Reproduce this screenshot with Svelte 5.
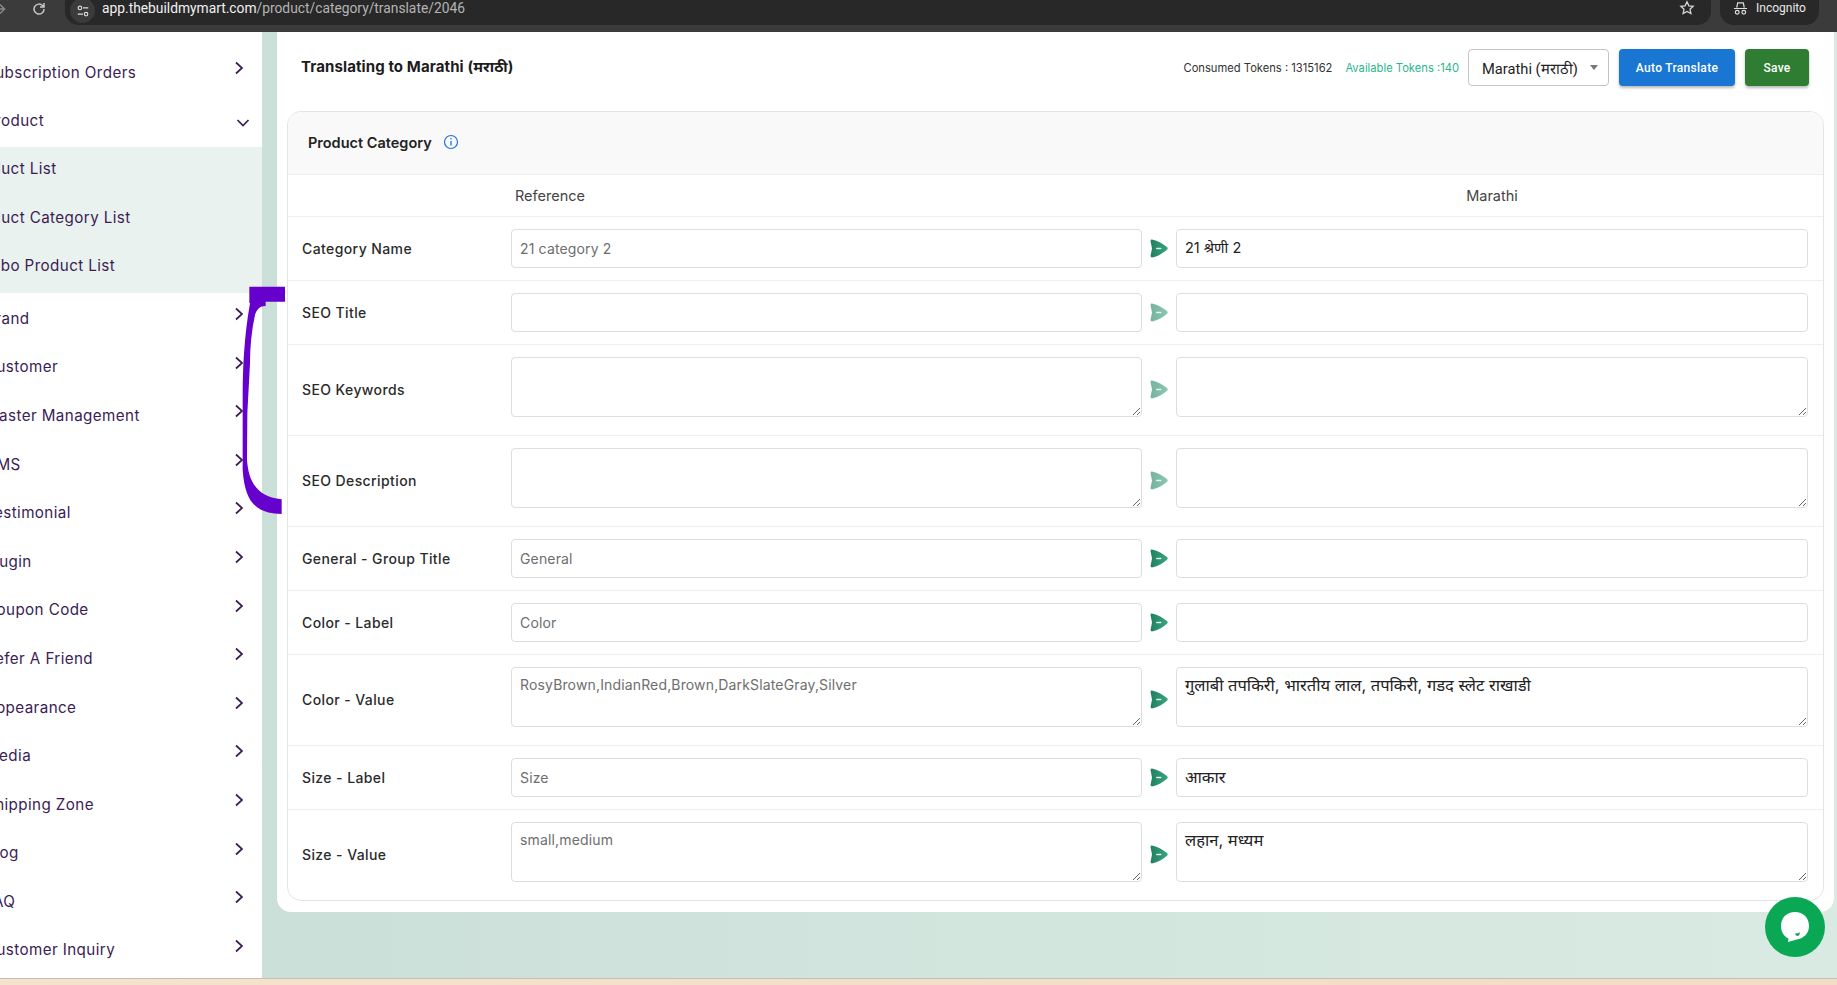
<script>
  const menu = [
    { name: 'Subscription Orders' },
    { name: 'Product', open: true, children: ['Product List', 'Product Category List', 'Combo Product List'] },
    { name: 'Brand' },
    { name: 'Customer' },
    { name: 'Master Management' },
    { name: 'CMS' },
    { name: 'Testimonial' },
    { name: 'Plugin' },
    { name: 'Coupon Code' },
    { name: 'Refer A Friend' },
    { name: 'Appearance' },
    { name: 'Media' },
    { name: 'Shipping Zone' },
    { name: 'Blog' },
    { name: 'FAQ' },
    { name: 'Customer Inquiry' }
  ];

  const rows = [
    { label: 'Category Name', ref: '21 category 2', value: '21 श्रेणी 2', tight: true },
    { label: 'SEO Title', ref: '', value: '', faded: true },
    { label: 'SEO Keywords', ref: '', value: '', area: true, faded: true },
    { label: 'SEO Description', ref: '', value: '', area: true, faded: true },
    { label: 'General - Group Title', ref: 'General', value: '' },
    { label: 'Color - Label', ref: 'Color', value: '' },
    {
      label: 'Color - Value',
      ref: 'RosyBrown,IndianRed,Brown,DarkSlateGray,Silver',
      value: 'गुलाबी तपकिरी, भारतीय लाल, तपकिरी, गडद स्लेट राखाडी',
      area: true
    },
    { label: 'Size - Label', ref: 'Size', value: 'आकार' },
    { label: 'Size - Value', ref: 'small,medium', value: 'लहान, मध्यम', area: true }
  ];
</script>

<div class="page">
  <header class="chrome">
    <svg class="nav-icon forward" viewBox="0 0 16 16"><path d="M1 8h11M8 3.500 12.500 8 8 12.500" fill="none" stroke="#8a8a8a" stroke-width="1.500" /></svg>
    <svg class="nav-icon reload" viewBox="0 0 16 16"><path d="M13 8a5 5 0 1 1-1.500-3.500L13 6M13 2v4H9" fill="none" stroke="#c8c8c8" stroke-width="1.500" /></svg>
    <div class="omnibox">
      <span class="tune">
        <svg viewBox="0 0 16 16" width="14" height="14"><path d="M8 4.500h6M2 11.500h6" stroke="#ddd" stroke-width="1.300" /><circle cx="4.500" cy="4.500" r="2" fill="none" stroke="#ddd" stroke-width="1.300" /><circle cx="11.500" cy="11.500" r="2" fill="none" stroke="#ddd" stroke-width="1.300" /></svg>
      </span>
      <span class="url"><b>app.thebuildmymart.com</b>/product/category/translate/2046</span>
      <svg class="star" viewBox="0 0 16 16" width="16" height="16"><path d="m8 1.800 1.900 4 4.300.5-3.200 3 .9 4.300L8 11.500l-3.900 2.100.9-4.300-3.200-3 4.300-.5z" fill="none" stroke="#d8d8d8" stroke-width="1.300" /></svg>
    </div>
    <div class="incognito">
      <svg viewBox="0 0 16 16" width="15" height="15"><path d="M1 8h14M4 7l1-5h6l1 5" fill="none" stroke="#ddd" stroke-width="1.300" /><circle cx="4.500" cy="12" r="2" fill="none" stroke="#ddd" stroke-width="1.300" /><circle cx="11.500" cy="12" r="2" fill="none" stroke="#ddd" stroke-width="1.300" /></svg>
      <span>Incognito</span>
    </div>
  </header>

  <div class="body">
    <aside class="sidebar">
      <ul class="menu">
        {#each menu as item}
          <li class="item">
            <span>{item.name}</span>
            {#if item.open}
              <svg class="chev down" viewBox="0 0 14 14"><path d="m1.500 4 5.500 5.500L12.500 4" /></svg>
            {:else}
              <svg class="chev" viewBox="0 0 14 14"><path d="m4 1.500 6 5.500-6 5.500" /></svg>
            {/if}
          </li>
          {#if item.children}
            <ul class="submenu">
              {#each item.children as child}
                <li>{child}</li>
              {/each}
            </ul>
          {/if}
        {/each}
      </ul>
    </aside>

    <main class="panel">
      <div class="topline">
        <h1>Translating to Marathi (मराठी)</h1>
        <div class="actions">
          <span class="tokens">Consumed Tokens : 1315162</span>
          <span class="tokens available">Available Tokens :140</span>
          <div class="select">
            <span>Marathi (मराठी)</span>
            <i class="caret"></i>
          </div>
          <button class="btn blue">Auto Translate</button>
          <button class="btn green">Save</button>
        </div>
      </div>

      <section class="card">
        <div class="card-head">
          <h2>Product Category</h2>
          <svg viewBox="0 0 16 16" width="16" height="16"><circle cx="8" cy="8" r="6.500" fill="none" stroke="#1a73e8" stroke-width="1.200" /><path d="M8 7v4.500" stroke="#1a73e8" stroke-width="1.300" /><circle cx="8" cy="4.800" r=".8" fill="#1a73e8" /></svg>
        </div>
        <div class="columns">
          <span class="ref-title">Reference</span>
          <span class="lang-title">Marathi</span>
        </div>
        {#each rows as row}
          <div class="row">
            <span class="label">{row.label}</span>
            {#if row.area}
              <textarea class="field ref" readonly value={row.ref}></textarea>
            {:else}
              <input class="field ref" readonly value={row.ref} />
            {/if}
            <svg class="send" class:faded={row.faded} viewBox="0 0 18 19" width="18" height="19">
              <path d="M2 .5C8 1.500 13 5 17 8q1.400 1.400 0 2.800C13 14 8 17.500 2 18.500Q.3 18.500.6 16.500L2 9.500.6 2.500Q.3.3 2 .5Z" fill="url(#sendFill)" />
              <rect x="6" y="8.800" width="5.500" height="1.400" rx=".7" fill="#fff" opacity=".85" />
            </svg>
            {#if row.area}
              <textarea class="field value" value={row.value}></textarea>
            {:else}
              <input class="field value" class:tight={row.tight} value={row.value} />
            {/if}
          </div>
        {/each}
      </section>
    </main>
  </div>

  <div class="taskbar"></div>

  <svg class="defs" width="0" height="0">
    <defs>
      <linearGradient id="sendFill" x1="0" y1="0" x2="1" y2="0">
        <stop offset="0" stop-color="#1f8060" />
        <stop offset="1" stop-color="#3aa57f" />
      </linearGradient>
    </defs>
  </svg>

  <!-- hand drawn marker bracket on top of the screenshot -->
  <svg class="marker" viewBox="0 0 900 810">
    <path d="M148 50H255V95H197V108C180 108 170 118 165 135 155 180 150 230 150 280L142 430 141 570C145 620 160 680 245 688V732C170 730 135 700 128 600L128 380C128 300 132 200 150 100L148 98Z" fill="#6600cc" />
  </svg>

  <button class="chat" aria-label="Chat">
    <svg viewBox="0 0 28 30" width="28" height="30">
      <path d="M14 0c8 0 14 5.500 14 14 0 6.500-4 10.500-8.500 12.500L7 30l.5-3.500C3 24.500 0 20 0 14 0 5.500 6 0 14 0Z" fill="#fff" />
      <path d="M14 21.500q3.500 0 5-1.200-.3 3.600-2.500 3.600t-2.500-2.400Z" fill="#0aa855" />
    </svg>
  </button>
</div>

<style>
  :global(body) {
    margin: 0;
    overflow: hidden;
  }

  .page {
    position: relative;
    width: 1837px;
    height: 985px;
    display: flex;
    flex-direction: column;
    overflow: hidden;
    font-family: Inter, "Noto Sans", sans-serif;
    color: #222;
  }

  .chrome {
    height: 32px;
    flex: none;
    background: #3b3b3b;
    display: flex;
    align-items: flex-start;
    position: relative;
  }

  .nav-icon {
    width: 16px;
    height: 16px;
    flex: none;
    margin-top: 1px;
  }

  .forward {
    margin-left: -8px;
  }

  .reload {
    margin-left: 23px;
  }

  .omnibox {
    margin-left: 18px;
    width: 1646px;
    height: 25px;
    background: #282828;
    border-radius: 0 0 14px 14px;
    display: flex;
    align-items: center;
    flex: none;
  }

  .tune {
    margin-left: 5px;
    width: 25px;
    height: 25px;
    margin-top: -4px;
    background: #3b3b3b;
    border-radius: 50%;
    display: flex;
    align-items: center;
    justify-content: center;
  }

  .url {
    margin-left: 7px;
    margin-top: -9px;
    font-family: Roboto, sans-serif;
    font-size: 13.800px;
    color: #b4b4b4;
  }

  .url b {
    font-weight: 400;
    color: #f0f0f0;
  }

  .star {
    margin-left: auto;
    margin-right: 16px;
    margin-top: -9px;
  }

  .incognito {
    margin-left: 9px;
    width: 99px;
    height: 25px;
    background: #282828;
    border-radius: 0 0 14px 14px;
    display: flex;
    gap: 8px;
    padding: 0 0 9px 13px;
    box-sizing: border-box;
    align-items: center;
    font-family: Roboto, sans-serif;
    font-size: 12px;
    color: #e8e8e8;
  }

  .body {
    flex: 1;
    display: flex;
    min-height: 0;
    background: linear-gradient(90deg, #c9ddd8 0%, #d3e6de 60%, #d9eae2 100%);
  }

  .sidebar {
    width: 262px;
    flex: none;
    background: #fff;
    overflow: hidden;
  }

  .menu {
    list-style: none;
    margin: 15px 0 0 -15px;
    padding: 0;
    color: #3a1d54;
    font-size: 15.200px;
    letter-spacing: 0.4px;
  }

  .item {
    height: 48.600px;
    display: flex;
    align-items: center;
    position: relative;
    white-space: nowrap;
  }

  .item span {
    padding-top: 2px;
  }

  .chev {
    position: absolute;
    left: 247px;
    top: 14px;
    width: 14px;
    height: 14px;
    fill: none;
    stroke: #3a1d54;
    stroke-width: 1.700;
  }

  .chev.down {
    left: 251px;
    top: 20px;
  }

  .submenu {
    list-style: none;
    margin: 3px 0 0 -19px;
    padding: 0;
    background: #e9f2ee;
  }

  .submenu li {
    height: 48.600px;
    line-height: 44px;
    white-space: nowrap;
  }

  .panel {
    margin: 0 3px 66px 15px;
    flex: 1;
    min-width: 0;
    background: #fff;
    border-radius: 0 0 14px 14px;
    padding: 0 10px;
    box-sizing: border-box;
  }

  .topline {
    height: 79px;
    box-sizing: border-box;
    display: flex;
    align-items: flex-start;
    justify-content: space-between;
    padding: 17px 15px 0 14px;
  }

  h1 {
    margin: 7px 0 0;
    font-size: 15px;
    font-weight: 700;
    letter-spacing: 0.1px;
    color: #1c1c1c;
  }

  .actions {
    display: flex;
    align-items: center;
  }

  .tokens {
    font-size: 11.200px;
    color: #333;
    margin-right: 13px;
  }

  .tokens.available {
    color: #2bb58c;
    margin-right: 9px;
  }

  .select {
    width: 141px;
    height: 37px;
    box-sizing: border-box;
    border: 1px solid #c4c4c4;
    border-radius: 4px;
    display: flex;
    align-items: center;
    justify-content: space-between;
    padding: 0 10px 0 13px;
    font-family: Roboto, sans-serif;
    font-size: 14.700px;
    color: #222;
    margin-right: 10px;
  }

  .caret {
    width: 0;
    height: 0;
    border: 4px solid transparent;
    border-top: 5px solid #777;
    border-bottom: 0;
  }

  .btn {
    height: 37px;
    border: 0;
    border-radius: 4px;
    color: #fff;
    font-family: Roboto, sans-serif;
    font-size: 12px;
    font-weight: 500;
    letter-spacing: 0.3px;
    box-shadow: 0 2px 3px rgba(0, 0, 0, 0.28);
  }

  .btn.blue {
    width: 116px;
    background: #1976d2;
    margin-right: 10px;
  }

  .btn.green {
    width: 64px;
    background: #2e7d32;
  }

  .card {
    border: 1px solid #e4e4e4;
    border-radius: 14px;
    overflow: hidden;
  }

  .card-head {
    height: 60px;
    padding: 0 0 2px 20px;
    background: #f9f9f9;
    border-bottom: 1px solid #eee;
    display: flex;
    align-items: center;
    gap: 11px;
  }

  h2 {
    margin: 0;
    font-size: 14.500px;
    font-weight: 600;
    color: #222;
  }

  .columns {
    height: 41px;
    border-bottom: 1px solid #eee;
    display: grid;
    grid-template-columns: 223px 665px 632px;
    align-items: center;
    font-size: 14.500px;
    color: #444;
  }

  .ref-title {
    grid-column: 2;
    padding-left: 4px;
  }

  .lang-title {
    grid-column: 3;
    text-align: center;
  }

  .row {
    display: grid;
    grid-template-columns: 223px 631px 34px 632px;
    align-items: center;
    padding: 12px 0;
    border-bottom: 1px solid #eee;
  }

  .row:last-child {
    border-bottom: 0;
  }

  .row:has(textarea) {
    padding-bottom: 18px;
  }

  .row:has(textarea) .label,
  .row:has(textarea) .send {
    margin-top: 5px;
  }

  .label {
    padding-left: 14px;
    padding-bottom: 1px;
    font-size: 14px;
    font-weight: 500;
    letter-spacing: 0.4px;
    color: #2b2b2b;
  }

  .field {
    display: block;
    box-sizing: border-box;
    width: 100%;
    height: 39px;
    border: 1px solid #ddd;
    border-radius: 4px;
    padding: 0 8px;
    font-family: Inter, "Noto Sans", sans-serif;
    font-size: 14px;
    color: #222;
    background: #fff;
    outline: none;
  }

  .field.ref {
    color: #6e6e6e;
    letter-spacing: 0.15px;
  }

  .field.value {
    font-size: 16.500px;
    padding-bottom: 3px;
  }

  .field.value.tight {
    font-size: 14.500px;
  }

  textarea.field {
    height: 60px;
    padding: 8px;
    resize: vertical;
  }

  textarea.field.value {
    padding: 5px 8px;
  }

  .send {
    justify-self: center;
  }

  .send.faded {
    opacity: 0.6;
  }

  .taskbar {
    height: 7px;
    flex: none;
    background: linear-gradient(90deg, #f3e3cf, #efdcc9);
    border-top: 1px solid #cdbcaa;
    box-sizing: border-box;
  }

  .defs {
    position: absolute;
  }

  .marker {
    position: absolute;
    left: 200px;
    top: 270px;
    width: 300px;
    height: 270px;
    pointer-events: none;
  }

  .chat {
    position: absolute;
    left: 1765px;
    top: 897px;
    width: 60px;
    height: 60px;
    border: 0;
    padding: 0;
    border-radius: 50%;
    background: #0aa855;
    display: flex;
    align-items: center;
    justify-content: center;
  }
</style>
